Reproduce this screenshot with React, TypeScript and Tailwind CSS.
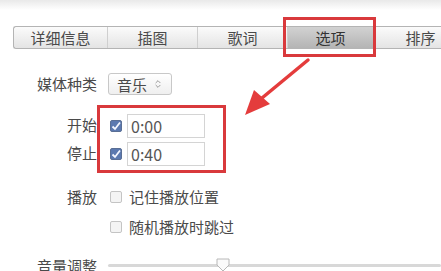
import { ChevronsUpDown } from "lucide-react";

const tabs = [
  { label: "详细信息", w: "w-[94px]" },
  { label: "插图", w: "w-[90px]" },
  { label: "歌词", w: "w-[90px]" },
  { label: "选项", w: "w-[86px]", active: true },
  { label: "排序", w: "w-[94px]" },
];

const CheckBox = ({ checked }: { checked?: boolean }) => (
  <span
    className={`flex h-[12px] w-[12px] items-center justify-center rounded-[2px] border ${
      checked ? "border-[#5a6f95] bg-[#5b79b0]" : "border-[#c4c4c4] bg-[#f4f4f4]"
    }`}
  >
    {checked && (
      <svg width="10" height="10" viewBox="0 0 10 10">
        <path d="M1.5 5.5 L4 8 L9 1.5" stroke="#f4f7ff" strokeWidth="1.8" fill="none" />
      </svg>
    )}
  </span>
);

const Label = ({ text }: { text: string }) => (
  <div className="w-[98px] shrink-0 pr-[1px] text-right">{text}</div>
);

const App = () => {
  return (
    <div
      className="relative h-[271px] w-[441px] overflow-hidden bg-white text-[15px] text-[#4a4a4a]"
      style={{ fontFamily: '"Noto Sans CJK SC", "Liberation Sans", sans-serif' }}
    >
      <div className="h-[10px] bg-gradient-to-b from-[#e9e9e9] to-white" />

      {/* tab bar */}
      <div className="ml-[13px] mt-[16px] flex h-[23px] overflow-hidden rounded-l-[3px] border border-r-0 border-[#b4b4b4] bg-gradient-to-b from-[#fbfbfb] to-[#e4e4e4] leading-[21px]">
        {tabs.map((t) => (
          <div
            key={t.label}
            className={`${t.w} shrink-0 border-r border-[#cfcfcf] text-center ${
              t.active ? "bg-gradient-to-b from-[#d2d2d2] to-[#b4b4b4] text-[#333]" : ""
            }`}
          >
            {t.label}
          </div>
        ))}
      </div>

      {/* form */}
      <div className="mt-[24px] flex items-center">
        <Label text="媒体种类" />
        <div className="ml-[10px] flex h-[22px] w-[64px] items-center gap-[6px] rounded-[3px] border border-[#c8c8c8] bg-gradient-to-b from-white to-[#efefef] pl-[8px] leading-none">
          <span>音乐</span>
          <ChevronsUpDown size={10} strokeWidth={2} className="text-[#888]" />
        </div>
      </div>

      <div className="mt-[18px] flex flex-col gap-[4px]">
        {[
          { l: "开始", v: "0:00" },
          { l: "停止", v: "0:40" },
        ].map((r) => (
          <div key={r.l} className="flex items-center">
            <Label text={r.l} />
            <div className="ml-[12px]">
              <CheckBox checked />
            </div>
            <div className="ml-[5px] flex h-[24px] w-[78px] items-center border border-[#d4d4d4] pl-[3px] text-[16px] text-[#555]">
              {r.v}
            </div>
          </div>
        ))}
      </div>

      <div className="mt-[20px] flex items-center">
        <Label text="播放" />
        <div className="ml-[12px]">
          <CheckBox />
        </div>
        <span className="ml-[7px]">记住播放位置</span>
      </div>
      <div className="mt-[8px] flex items-center">
        <div className="w-[98px] shrink-0" />
        <div className="ml-[12px]">
          <CheckBox />
        </div>
        <span className="ml-[7px]">随机播放时跳过</span>
      </div>

      <div className="mt-[16px] flex items-center">
        <Label text="音量调整" />
        <div className="relative ml-[10px] h-[3px] flex-1 rounded-full bg-[#d8d8d8]">
          <svg
            className="absolute left-[108px] top-[-6px]"
            width="14"
            height="14"
            viewBox="0 0 14 14"
          >
            <path d="M1 1 H13 V7 L7 13 L1 7 Z" fill="#fafafa" stroke="#b8b8b8" />
          </svg>
        </div>
      </div>

      {/* annotations */}
      <div className="absolute left-[283px] top-[17px] h-[40px] w-[93px] border-[3px] border-[#d9393c]" />
      <div className="absolute left-[97px] top-[105px] h-[68px] w-[129px] border-[3px] border-[#d9393c]" />
      <svg className="absolute left-[240px] top-[56px]" width="72" height="64" viewBox="0 0 72 64">
        <path d="M68 4 L22 42" stroke="#e43c3c" strokeWidth="3.5" strokeLinecap="round" />
        <path d="M5 59 L14 34 L30 48 Z" fill="#e43c3c" />
      </svg>
    </div>
  );
};

export default App;
